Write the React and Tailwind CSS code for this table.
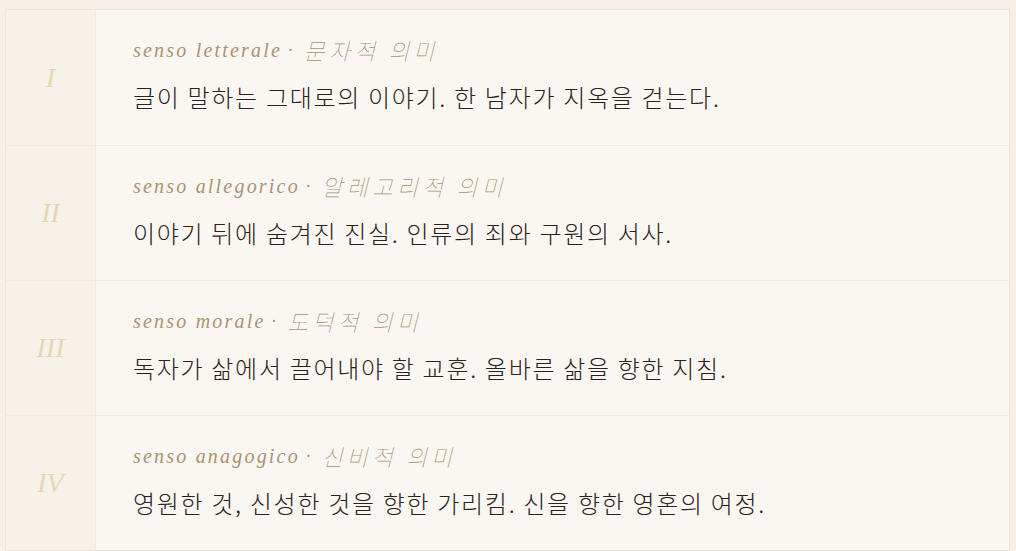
const senses = [
  {
    num: "I",
    latin: "senso letterale",
    korean: "문자적 의미",
    text: "글이 말하는 그대로의 이야기. 한 남자가 지옥을 걷는다.",
  },
  {
    num: "II",
    latin: "senso allegorico",
    korean: "알레고리적 의미",
    text: "이야기 뒤에 숨겨진 진실. 인류의 죄와 구원의 서사.",
  },
  {
    num: "III",
    latin: "senso morale",
    korean: "도덕적 의미",
    text: "독자가 삶에서 끌어내야 할 교훈. 올바른 삶을 향한 지침.",
  },
  {
    num: "IV",
    latin: "senso anagogico",
    korean: "신비적 의미",
    text: "영원한 것, 신성한 것을 향한 가리킴. 신을 향한 영혼의 여정.",
  },
];

const serif = { fontFamily: '"Liberation Serif", "Noto Sans CJK KR", serif' };
const korean = { fontFamily: '"Noto Sans CJK KR", sans-serif' };

export default function App() {
  return (
    <div className="min-h-screen bg-[#f4f0e7] pt-[9px] pl-[5px] pr-[6px]">
      <div className="border border-[#eee5d4] bg-[#faf7f2]">
        {senses.map((s, i) => (
          <div
            key={s.num}
            className={`flex h-[135px] ${i > 0 ? "border-t border-[#f1eadd]" : ""}`}
          >
            <div
              className="w-[90px] shrink-0 flex items-center justify-center bg-[#f6f2ea] border-r border-[#f1eadd] text-[28px] italic text-[#e6d6b1]"
              style={serif}
            >
              {s.num}
            </div>
            <div className="flex-1 pl-[37px] pt-[26px]">
              <div className="h-[28px] flex items-center italic text-[#aa9372]">
                <span className="text-[20px] tracking-[2.2px]" style={serif}>
                  {s.latin}
                </span>
                <span className="ml-[6px] mr-[11px] text-[18px]" style={serif}>
                  ·
                </span>
                <span className="text-[23px] font-thin tracking-[4px]" style={korean}>
                  {s.korean}
                </span>
              </div>
              <p
                className="mt-[16px] h-[34px] leading-[34px] text-[24px] font-light tracking-[1.7px] text-[#2b2119]"
                style={korean}
              >
                {s.text}
              </p>
            </div>
          </div>
        ))}
      </div>
    </div>
  );
}
